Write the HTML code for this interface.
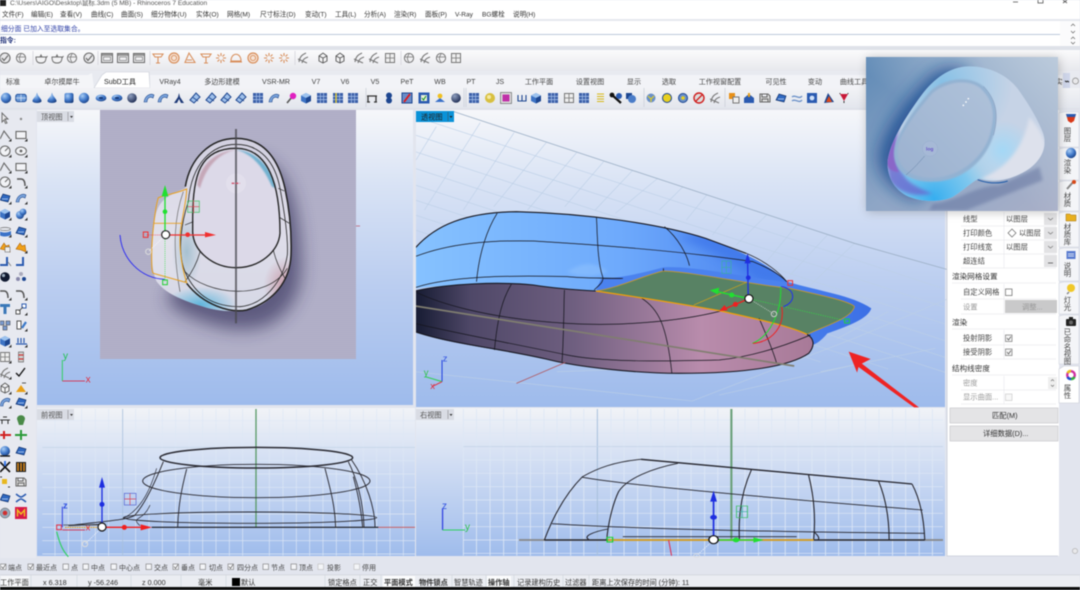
<!DOCTYPE html>
<html><head><meta charset="utf-8"><title>Rhino</title>
<style>
html,body{margin:0;padding:0;background:#e2e5ee;width:1080px;height:590px;overflow:hidden}
svg{display:block;filter:blur(.5px)}
text{font-family:"Liberation Sans","Noto Sans CJK SC",sans-serif;font-size:6.8px;fill:#333}
.m text{font-size:6.6px;fill:#333}
.t text{font-size:7.1px;text-anchor:middle;fill:#444}
.p text{font-size:7.3px;fill:#444}
.p .g{fill:#999}
.p .h{font-size:7.6px;fill:#333}
.o text{font-size:7px;fill:#444}
.s text{font-size:7.2px;fill:#333}
.v text{font-size:7.4px;writing-mode:vertical-rl;fill:#444;text-anchor:start}
</style></head><body>
<svg width="1080" height="590" viewBox="0 0 1080 590" xmlns="http://www.w3.org/2000/svg">
<defs>
<linearGradient id="vp" x1="0" y1="0" x2="0" y2="1"><stop offset="0" stop-color="#f6f7fa"/><stop offset=".25" stop-color="#d9e3f5"/><stop offset=".6" stop-color="#bacdf0"/><stop offset="1" stop-color="#9ebbec"/></linearGradient>
<linearGradient id="vp2" x1="0" y1="0" x2="0" y2="1"><stop offset="0" stop-color="#f1f3f7"/><stop offset=".4" stop-color="#cfdcf3"/><stop offset="1" stop-color="#9fbcec"/></linearGradient>
<linearGradient id="tb" x1="0" y1="0" x2="0" y2="1"><stop offset="0" stop-color="#fbfbfc"/><stop offset="1" stop-color="#e6e7ec"/></linearGradient>
<linearGradient id="tb2" x1="0" y1="0" x2="0" y2="1"><stop offset="0" stop-color="#f2f3f6"/><stop offset="1" stop-color="#e3e6ed"/></linearGradient>
<radialGradient id="bs" cx=".35" cy=".3" r=".8"><stop offset="0" stop-color="#a8cdf5"/><stop offset=".55" stop-color="#3f77c8"/><stop offset="1" stop-color="#173a7a"/></radialGradient>
<radialGradient id="ds" cx=".35" cy=".3" r=".8"><stop offset="0" stop-color="#90a0c0"/><stop offset="1" stop-color="#15234a"/></radialGradient>
<pattern id="tex" width="3" height="2" patternUnits="userSpaceOnUse"><rect width="3" height="1" fill="#8d8aa8" opacity=".14"/></pattern>
<linearGradient id="body" x1="0" y1="0" x2="0" y2="1"><stop offset="0" stop-color="#d2d0e0"/><stop offset=".6" stop-color="#dedde9"/><stop offset="1" stop-color="#d6d8e6"/></linearGradient>
<radialGradient id="cy" cx=".5" cy=".5" r=".5"><stop offset="0" stop-color="#58b4dc" stop-opacity=".95"/><stop offset="1" stop-color="#58b4dc" stop-opacity="0"/></radialGradient>
<radialGradient id="pk" cx=".5" cy=".5" r=".5"><stop offset="0" stop-color="#c48a98" stop-opacity=".8"/><stop offset="1" stop-color="#c48a98" stop-opacity="0"/></radialGradient>
<radialGradient id="bb" cx=".5" cy=".5" r=".5"><stop offset="0" stop-color="#9dbccc" stop-opacity=".85"/><stop offset="1" stop-color="#9dbccc" stop-opacity="0"/></radialGradient>
<filter id="b6" x="-30%" y="-30%" width="160%" height="160%"><feGaussianBlur stdDeviation="26"/></filter>
<filter id="b2" x="-30%" y="-30%" width="160%" height="160%"><feGaussianBlur stdDeviation="5"/></filter>
<filter id="b3" x="-30%" y="-30%" width="160%" height="160%"><feGaussianBlur stdDeviation="14"/></filter>
<filter id="b1" x="-30%" y="-30%" width="160%" height="160%"><feGaussianBlur stdDeviation="2.5"/></filter>
<linearGradient id="blu" x1="0" y1="0" x2="1" y2="0"><stop offset="0" stop-color="#86c2ff"/><stop offset=".45" stop-color="#6eaafc"/><stop offset=".75" stop-color="#4d86f0"/><stop offset="1" stop-color="#3c6fe6"/></linearGradient>
<linearGradient id="und" x1="0" y1="0" x2="1" y2="0"><stop offset="0" stop-color="#161b32"/><stop offset=".14" stop-color="#4f4868"/><stop offset=".4" stop-color="#6f5f80"/><stop offset=".72" stop-color="#b98cac"/><stop offset="1" stop-color="#a87a98"/></linearGradient>
<linearGradient id="ibg" x1="0" y1="0" x2="1" y2="1"><stop offset="0" stop-color="#5f8ab6"/><stop offset=".5" stop-color="#8ea6c6"/><stop offset="1" stop-color="#aab0c8"/></linearGradient>
<linearGradient id="ibg2" x1="0" y1="1" x2="1" y2="0"><stop offset=".45" stop-color="#bccbdc" stop-opacity="0"/><stop offset="1" stop-color="#bccbdc"/></linearGradient>
<linearGradient id="itop" x1="0" y1="1" x2="1" y2="0"><stop offset="0" stop-color="#9bb1cf"/><stop offset="1" stop-color="#afc2da"/></linearGradient>
<radialGradient id="ic1" gradientUnits="userSpaceOnUse" cx="205" cy="425" r="210"><stop offset="0" stop-color="#36aef0"/><stop offset=".55" stop-color="#6cc4f0" stop-opacity=".8"/><stop offset="1" stop-color="#9cd4f0" stop-opacity="0"/></radialGradient>
<radialGradient id="ic2" gradientUnits="userSpaceOnUse" cx="230" cy="80" r="210"><stop offset="0" stop-color="#86c0e6"/><stop offset="1" stop-color="#8cc6ea" stop-opacity="0"/></radialGradient>
<radialGradient id="ic3" gradientUnits="userSpaceOnUse" cx="410" cy="280" r="90"><stop offset="0" stop-color="#a4d8f6"/><stop offset="1" stop-color="#a4d8f6" stop-opacity="0"/></radialGradient>

<g id="g1"><circle r="5" fill="#e8e8ea" stroke="#6b6b6b" stroke-width="1.1"/><path d="M-3 0 L-1 2.5 L3 -2.5" stroke="#666" fill="none" stroke-width="1.1"/></g>
<g id="g2"><circle r="4.6" fill="#f0f0f2" stroke="#777" stroke-width="1"/><path d="M-4 -1 H4 M0 -4 C-2 -1 -2 2 0 4" stroke="#777" fill="none" stroke-width=".8"/></g>
<g id="g3"><path d="M-5 -1 C-5 4 -3 5 0 5 C3 5 5 4 5 -1 Z M-1 -1 L0 -3 L1 -1 M5 0 L6.5 -2" fill="#f2f2f3" stroke="#6f6f6f" stroke-width="1"/></g>
<g id="g4"><rect x="-5.5" y="-4.5" width="11" height="9" fill="#f0f0f2" stroke="#6f6f6f" stroke-width="1.1"/><rect x="-3.5" y="-1" width="7" height="3.5" fill="none" stroke="#888" stroke-width=".8"/><rect x="-5" y="-4" width="10" height="2" fill="#999"/></g>
<g id="g5"><path d="M-4 -2 L0 -5 L4 -2 V3 L0 5 L-4 3 Z M-4 -2 L0 0 L4 -2 M0 0 V5" fill="#f2f2f3" stroke="#555" stroke-width=".9"/></g>
<g id="g6"><path d="M-4 4 C-3 -3 1 -4 3 -5 M-1 5 C0 1 2 0 5 -1 M-5 1 L4 5" fill="none" stroke="#777" stroke-width="1.1"/></g>
<g id="g7"><rect x="-4.5" y="-4.5" width="9" height="9" fill="#eee" stroke="#777"/><path d="M-4.5 0 H4.5 M0 -4.5 V4.5" stroke="#777" stroke-width=".8"/></g>
<g id="o1"><circle r="5" fill="#f5e3d6" stroke="#d88f5c" stroke-width="1.2"/><circle r="2.6" fill="none" stroke="#d88f5c" stroke-width=".9"/></g>
<g id="o2"><path d="M-5 -4 H5 L3 -1 H-3 Z M0 -1 V5 M-2 5 H2" fill="none" stroke="#d88f5c" stroke-width="1.1"/></g>
<g id="o3"><path d="M-5 4.5 L-1 -5 L5 4.5 Z M-3 2 L2 2" fill="none" stroke="#d88f5c" stroke-width="1.1"/></g>
<g id="o4"><path d="M0 -5 V-2 M0 2 V5 M-5 0 H-2 M2 0 H5 M-3.5 -3.5 L-1.5 -1.5 M1.5 1.5 L3.5 3.5 M3.5 -3.5 L1.5 -1.5 M-1.5 1.5 L-3.5 3.5" stroke="#d88f5c" stroke-width="1.1"/></g>
<g id="o5"><path d="M-5 3 C-5 -6 5 -6 5 3 Z M-6 4 H6" fill="none" stroke="#d88f5c" stroke-width="1.1"/></g>

<g id="sb"><circle r="5.2" fill="url(#bs)"/></g>
<g id="sd"><circle r="4.8" fill="url(#ds)"/></g>
<g id="cb"><path d="M-5 -2.5 L0 -5 L5 -2.5 V3 L0 5.5 L-5 3 Z" fill="#3d73c4"/><path d="M-5 -2.5 L0 0 L5 -2.5 L0 -5 Z" fill="#9cc2ee"/><path d="M0 0 V5.5 L5 3 V-2.5 Z" fill="#1d4690"/></g>
<g id="cn"><path d="M0 -5.5 C1 -1 5 1 4.5 3.5 C3 5.5 -3 5.5 -4.5 3.5 C-5 1 -1 -1 0 -5.5 Z" fill="url(#bs)"/></g>
<g id="cy2"><rect x="-4.5" y="-5" width="9" height="10" rx="2" fill="url(#bs)"/></g>
<g id="el"><ellipse rx="5.4" ry="3.4" fill="url(#bs)"/><ellipse rx="2.2" ry="1.1" fill="#173a7a"/></g>
<g id="rc"><rect x="-5.2" y="-3.6" width="10.4" height="7.2" rx="2" fill="#6c9bd8" stroke="#1f4f9b"/><path d="M0 -3.5 V3.5 M-5 0 H5" stroke="#dbe7f7" stroke-width=".7"/></g>
<g id="gd"><rect x="-5" y="-5" width="10" height="10" fill="#3b5fa8"/><path d="M-5 -1.6 H5 M-5 1.6 H5 M-1.6 -5 V5 M1.6 -5 V5" stroke="#a9c4ec" stroke-width=".7"/></g>
<g id="wd"><path d="M-5 2 L1 -5 L5 -1 L-1 5 Z" fill="#9fc0ea" stroke="#1d4690" stroke-width="1"/><path d="M-2 -.5 L3 3" stroke="#1d4690" stroke-width=".8"/></g>
<g id="wy"><path d="M0 -5 L1 -1 L5 5 L2 5 L0 1 L-2 5 L-5 5 L-1 -1 Z" fill="#1e3a78"/></g>
<g id="ar"><path d="M-5 4 C-4 -3 2 -5 5 -3 L4 0 C1 -2 -2 0 -2 4 Z" fill="#7ba4dc" stroke="#234b8e" stroke-width=".6"/></g>
<g id="bl"><path d="M-5 2 L-2 -4 L5 -2 L3 4 Z" fill="#2f68c0" stroke="#0f2f6a" stroke-width=".7"/><path d="M-3 1 L3 1" stroke="#cfe0f8" stroke-width=".7"/></g>
<g id="or"><path d="M-5 2 L-1 -4 L1 -1 L4 -2 L5 5 L0 3 Z" fill="#f0a018" stroke="#a86008" stroke-width=".6"/></g>
<g id="arw"><path d="M-3 -5 L3 1 L0 1 L2 5 L0.5 5.5 L-1 2 L-3 4 Z" fill="#e8e8ea" stroke="#666" stroke-width=".9"/></g>
<g id="ln"><path d="M-5 4 L-1 -4 L5 4" fill="none" stroke="#666" stroke-width="1.1"/></g>
<g id="rcg"><rect x="-5" y="-3.5" width="10" height="7" fill="#f2f3f6" stroke="#666" stroke-width="1.1"/></g>
<g id="crg"><circle r="5" fill="#f2f3f6" stroke="#666" stroke-width="1.1"/><path d="M0 0 L3 -3" stroke="#666"/></g>
<g id="elg"><ellipse rx="5.4" ry="4" fill="#f2f3f6" stroke="#666" stroke-width="1"/><circle r="1.4" fill="#666"/></g>
<g id="cv"><path d="M-5 -3 H-1 C2 -3 3 0 3 4" fill="none" stroke="#555" stroke-width="1.5"/></g>
<g id="dt"><path d="M3.5 6.5 L6.5 6.5 L6.5 3.5 Z" fill="#333"/></g>
<g id="dsp"><circle cx="0" cy="0" r="4.8" fill="#111a30"/><circle cx="-1.5" cy="-1.5" r="1.6" fill="#9ab"/></g>
<g id="gs"><path d="M-5 -4 H3 L5 -2 V4 H-5 Z M-3 -4 V-1 H2 V-4 M-3 4 V1 H3 V4" fill="#ddd" stroke="#666"/></g>
</defs>

<!-- Base -->
<rect width="1080" height="590" fill="#e2e5ee"/>
<rect width="1080" height="19" fill="#ffffff"/>
<!-- Title -->
<rect x="0" y="0" width="6" height="6" fill="#222"/>
<text x="10" y="5" style="font-size:6.6px;fill:#555">C:\Users\AIGO\Desktop\鼠标.3dm (5 MB) - Rhinoceros 7 Education</text>
<path d="M1013 2 H1018" stroke="#555" stroke-width=".8"/>
<rect x="1038" y="-2" width="5" height="5" fill="none" stroke="#555" stroke-width=".8"/>
<path d="M1063 0 L1067 3 M1067 0 L1063 3" stroke="#555" stroke-width=".8"/>

<!-- Menu -->
<g class="m">
<text x="2" y="16.5">文件(F)</text><text x="31" y="16.5">编辑(E)</text><text x="60" y="16.5">查看(V)</text><text x="91" y="16.5">曲线(C)</text><text x="121" y="16.5">曲面(S)</text><text x="151" y="16.5">细分物体(U)</text><text x="196" y="16.5">实体(O)</text><text x="227" y="16.5">网格(M)</text><text x="260" y="16.5">尺寸标注(D)</text><text x="305" y="16.5">变动(T)</text><text x="335" y="16.5">工具(L)</text><text x="364" y="16.5">分析(A)</text><text x="394" y="16.5">渲染(R)</text><text x="425" y="16.5">面板(P)</text><text x="455" y="16.5">V-Ray</text><text x="482" y="16.5">BG螺栓</text><text x="513" y="16.5">说明(H)</text>
</g>
<!-- Command -->
<rect x="0" y="19" width="1080" height="2" fill="#e6e8ee"/>
<rect x="0" y="21" width="1060" height="13" fill="#fff"/>
<rect x="0" y="34" width="1080" height=".8" fill="#b5c4d8"/>
<rect x="0" y="35" width="1060" height="11" fill="#fff"/>
<rect x="1060" y="21" width="20" height="25" fill="#fbfbfc"/>
<path d="M1071 26 L1073 24 L1075 26 M1071 31 L1073 33 L1075 31 M1071 39 L1073 37 L1075 39 M1071 42 L1073 44 L1075 42" fill="none" stroke="#666" stroke-width=".7"/>
<rect x="0" y="46" width="1080" height="4" fill="#dfe2e9"/>
<text x="1" y="31" style="font-size:6.8px;fill:#3042a8">细分面 已加入至选取集合。</text>
<text x="0" y="42.5" style="font-size:6.8px;fill:#1d2f78;font-weight:700">指令:</text>

<!-- Toolbar 1 -->
<rect x="0" y="50" width="1080" height="22" fill="url(#tb)"/>
<g>
<use href="#g1" x="5" y="58"/><use href="#g2" x="21" y="58"/><use href="#g3" x="41" y="58"/><use href="#g3" x="57" y="58"/><use href="#g2" x="72" y="58"/><use href="#g1" x="89" y="58"/>
<use href="#g4" x="107" y="58"/><use href="#g4" x="123" y="58"/><use href="#g4" x="139" y="58"/>
<use href="#o2" x="158" y="58"/><use href="#o1" x="174" y="58"/><use href="#o3" x="190" y="58"/><use href="#o2" x="206" y="58"/><use href="#o4" x="221" y="58"/><use href="#o5" x="236" y="58"/><use href="#o1" x="253" y="58"/><use href="#o4" x="269" y="58"/><use href="#o4" x="284" y="58"/>
<use href="#g6" x="303" y="58"/><use href="#g5" x="323" y="58"/><use href="#g5" x="340" y="58"/><use href="#g6" x="359" y="58"/><use href="#g6" x="374" y="58"/><use href="#g7" x="390" y="58"/><use href="#g2" x="409" y="58"/><use href="#g6" x="425" y="58"/><use href="#g2" x="441" y="58"/><use href="#g7" x="456" y="58"/>
<path d="M33 51 V65 M98 51 V65 M150 51 V65 M295 51 V65 M401 51 V65" stroke="#cfcfd6" stroke-width=".7"/>
</g>

<!-- Tabs -->
<rect x="0" y="71" width="1080" height="17" fill="#e8eaf0"/>
<path d="M0 75 H88 L92 73 L94 88 H0 Z" fill="#f4f5f8"/>
<path d="M94 88 L102 75 L106 72 H149 L150 88 Z" fill="#fff" stroke="#c8ccd6" stroke-width=".6"/>
<rect x="150" y="75" width="912" height="13" fill="#f2f3f7"/>
<rect x="1063" y="73" width="7" height="15" fill="#cfd6ea"/>
<circle cx="1075.5" cy="81" r="3" fill="#e8e8ea" stroke="#888" stroke-width=".7"/>
<path d="M1065 81 L1067 82 M1067 81 L1069 82" stroke="#222" stroke-width="1"/>
<g class="t">
<text x="13" y="84">标准</text><text x="62" y="84">卓尔摸犀牛</text><text x="120" y="84" style="fill:#222">SubD工具</text><text x="170" y="84">VRay4</text><text x="222" y="84">多边形建模</text><text x="276" y="84">VSR-MR</text><text x="316" y="84">V7</text><text x="345" y="84">V6</text><text x="375" y="84">V5</text><text x="407" y="84">PeT</text><text x="440" y="84">WB</text><text x="471" y="84">PT</text><text x="500" y="84">JS</text><text x="539" y="84">工作平面</text><text x="590" y="84">设置视图</text><text x="634" y="84">显示</text><text x="669" y="84">选取</text><text x="720" y="84">工作视窗配置</text><text x="776" y="84">可见性</text><text x="815" y="84">变动</text><text x="854" y="84">曲线工具</text><text x="1059" y="84">实</text>
</g>

<!-- Toolbar 2 -->
<rect x="0" y="88" width="1080" height="20" fill="url(#tb2)"/>
<g>
<use href="#sb" x="6" y="98"/><use href="#rc" x="21" y="98"/><use href="#cn" x="37" y="98"/><use href="#cn" x="52" y="98"/><use href="#cy2" x="69" y="98"/><use href="#sb" x="84" y="98"/><use href="#el" x="101" y="98"/><use href="#el" x="117" y="98"/><use href="#sd" x="132" y="98"/><use href="#ar" x="149" y="98"/><use href="#ar" x="163" y="98"/><use href="#wy" x="179" y="98"/><use href="#wd" x="195" y="98"/><use href="#wd" x="211" y="98"/><use href="#wd" x="226" y="98"/><use href="#wd" x="241" y="98"/><use href="#gd" x="258" y="98"/><use href="#ar" x="274" y="98"/>
<g transform="translate(291 98)"><path d="M-4 5 L1 -1" stroke="#555" stroke-width="1.6"/><circle cx="2" cy="-2" r="3.2" fill="#e020c0"/></g>
<use href="#cb" x="306" y="98"/><use href="#gd" x="322" y="98"/>
<g transform="translate(338 98)"><use href="#gd"/><path d="M-2 -5 V5" stroke="#f0d020" stroke-width="1.2"/></g>
<use href="#gd" x="353" y="98"/>
<g transform="translate(372 98)"><path d="M-5 -2 H5 M-4 -2 V4 M4 -2 V4 M-5 4 H-2 M2 4 H5" stroke="#333" stroke-width="1.3" fill="none"/></g>
<g transform="translate(389 98)"><circle cy="-2.5" r="3" fill="#1d4690"/><circle cy="2.5" r="3" fill="#1d4690"/></g>
<g transform="translate(407 98)"><rect x="-5" y="-5" width="10" height="10" fill="#6a8cc8" stroke="#1d4690"/><path d="M-3 4 L3 -4" stroke="#e01818" stroke-width="1.8"/></g>
<g transform="translate(424 98)"><rect x="-5.5" y="-5.5" width="11" height="11" fill="#2a5ab0"/><rect x="-3" y="-3" width="6" height="6" fill="#e8f0d8"/><path d="M-2 0 L-.5 2 L2 -2" stroke="#0a8a20" fill="none"/></g>
<g transform="translate(440 98)"><path d="M-5 4 L0 0 L5 4 Z" fill="#3a70c8"/><circle cy="-2" r="2.4" fill="#f0c020"/></g>
<use href="#sd" x="456" y="98"/><path d="M466 88 V107" stroke="#c8ccd6" stroke-width=".7"/>
<use href="#gd" x="474" y="98"/>
<g transform="translate(490 98)"><circle r="5" fill="#d8c040"/><circle cx="-1" cy="-1" r="2" fill="#f4e8a0"/></g>
<g transform="translate(506 98)"><rect x="-5.5" y="-5.5" width="11" height="11" fill="#ddd" stroke="#555" stroke-width=".6"/><rect x="-3.5" y="-3.5" width="7" height="7" fill="#c030a8"/></g>
<g transform="translate(522 98)"><path d="M-4 -3 V3 H4 V-3 M0 -3 V3" fill="none" stroke="#1d4690" stroke-width="1.1"/></g>
<use href="#cb" x="536" y="98"/>
<use href="#gd" x="553" y="98"/><use href="#g7" x="569" y="98"/><use href="#gd" x="584" y="98"/>
<g transform="translate(600 98)"><path d="M-3 -4 H4 M-3 -1.5 H4 M-3 1 H4 M-3 3.5 H4" stroke="#d8b818" stroke-width="1"/></g>
<g transform="translate(616 98)"><path d="M-5 -4 L5 5" stroke="#111" stroke-width="2.2"/><circle cx="-4" cy="-3" r="2.4" fill="#111"/><circle cx="3" cy="-2" r="3" fill="#2a5ab0"/></g>
<g transform="translate(631 98)"><rect x="-5" y="-5" width="6" height="6" fill="#1d4690"/><circle cx="1" cy="1" r="4" fill="#4a7cc8"/></g>
<g transform="translate(651 98)"><circle r="4.5" fill="#6a90c8"/><path d="M-3 -2 L0 1 L3 -2 M0 1 V4" stroke="#e8d020" stroke-width="1.1" fill="none"/></g>
<g transform="translate(667 98)"><circle r="4.5" fill="#e8d020" stroke="#1d4690"/></g>
<g transform="translate(683 98)"><circle r="4.5" fill="#6a90c8" stroke="#1d4690"/><circle r="1.8" fill="#e8d020"/></g>
<g transform="translate(699 98)"><circle r="5" fill="#ddd" stroke="#d02020" stroke-width="1.4"/><path d="M-3.5 3.5 L3.5 -3.5" stroke="#d02020" stroke-width="1.3"/></g>
<use href="#g6" x="715" y="98"/>
<g transform="translate(734 98)"><rect x="-5" y="-5" width="6" height="6" fill="#e89018"/><rect x="-1" y="-1" width="6" height="6" fill="#eee" stroke="#777"/></g>
<g transform="translate(749 98)"><path d="M-5 5 V0 L0 -4 L5 0 V5 Z" fill="#2a5ab0"/><rect x="-1" y="-5" width="2" height="4" fill="#e8a018"/></g>
<use href="#gs" x="765" y="98"/>
<use href="#bl" x="781" y="98"/>
<g transform="translate(797 98)"><path d="M-5 -1 C-2 -4 2 2 5 -2 M-5 3 C-2 0 2 6 5 2" stroke="#6a90c8" stroke-width="1.3" fill="none"/></g>
<g transform="translate(812 98)"><rect x="-5" y="-5" width="10" height="10" fill="#2a5ab0"/><circle r="2.4" fill="#cfe0f8"/></g>
<g transform="translate(829 98)"><path d="M-5 5 L-1 -5 L5 4 Z" fill="#1d4690"/><path d="M-3 4 L0 -2 L3 4 Z" fill="#e04818"/></g>
<g transform="translate(844 98)"><path d="M-4 -4 L4 -4 L0 3 Z" fill="#c81838"/><path d="M-4 -4 V-5 M4 -4 V-5 M0 3 V5" stroke="#333"/></g>
<path d="M366 88 V107 M464 88 V107 M644 88 V107 M725 88 V107" stroke="#c8ccd6" stroke-width=".7"/>
</g>
<rect x="0" y="108" width="1080" height="2" fill="#dfe2ea"/>

<!-- Left toolbar -->
<rect x="0" y="110" width="36" height="448" fill="#e7e9f0"/>
<g>
<use href="#arw" x="5" y="118"/><circle cx="21" cy="119" r="1.2" fill="#888"/>
<use href="#ln" x="5" y="135"/><use href="#rcg" x="21" y="135"/><use href="#dt" x="5" y="135"/><use href="#dt" x="21" y="135"/>
<use href="#crg" x="5" y="151"/><use href="#elg" x="21" y="151"/><use href="#dt" x="5" y="151"/><use href="#dt" x="21" y="151"/>
<use href="#ln" x="5" y="167"/><use href="#rcg" x="21" y="167"/><use href="#dt" x="5" y="167"/><use href="#dt" x="21" y="167"/>
<use href="#crg" x="5" y="182"/><use href="#cv" x="22" y="182"/><use href="#dt" x="5" y="182"/><use href="#dt" x="21" y="182"/>
<use href="#bl" x="5" y="198"/><use href="#ar" x="21" y="198"/><use href="#dt" x="5" y="198"/><use href="#dt" x="21" y="198"/>
<use href="#cb" x="5" y="214"/><g transform="translate(21 214)"><circle cx="-1" cy="1" r="4" fill="url(#bs)"/><circle cx="2" cy="-2" r="3.4" fill="url(#bs)"/></g><use href="#dt" x="5" y="214"/><use href="#dt" x="21" y="214"/>
<g transform="translate(5 231)"><ellipse cy="-2" rx="5.5" ry="1.6" fill="none" stroke="#555" stroke-width=".6"/><path d="M-6 0 C-2 2 2 2 6 0 V4 C2 6 -2 6 -6 4 Z" fill="#3a72c8"/></g><use href="#bl" x="21" y="231"/><use href="#dt" x="5" y="231"/><use href="#dt" x="21" y="231"/>
<g transform="translate(5 247)"><use href="#or"/><rect x="0" y="0" width="5" height="5" fill="#eee" stroke="#555" stroke-width=".5"/></g><use href="#or" x="21" y="247"/><use href="#dt" x="21" y="247"/>
<g transform="translate(5 261)"><path d="M-5 3 H1 V-4 H3 V5 H-5 Z" fill="#2a5ab0"/><path d="M3 1 L6 5" stroke="#888"/></g><g transform="translate(21 261)"><path d="M-5 3 H1 V-4 H3 V5 H-5 Z" fill="#2a5ab0"/></g>
<use href="#dsp" x="5" y="277"/><g transform="translate(21 277)"><circle cx="0" cy="-3" r="2" fill="#aab"/><circle cx="-3" cy="2" r="2" fill="#88a"/><circle cx="3" cy="2" r="2" fill="#1d4690"/></g>
<use href="#cv" x="5" y="294"/><use href="#cv" x="21" y="294"/><use href="#dt" x="5" y="294"/><use href="#dt" x="21" y="294"/>
<g transform="translate(5 309)"><path d="M-5 -5 H5 V-2 H1.5 V5 H-1.5 V-2 H-5 Z" fill="#3a78b8"/></g><g transform="translate(21 309)"><rect x="1" y="-5" width="4" height="4" fill="#fff" stroke="#2a5ab0"/><rect x="-5" y="1" width="4" height="4" fill="#fff" stroke="#555"/><path d="M-2 2 L2 -2" stroke="#555"/></g><use href="#dt" x="21" y="309"/>
<g transform="translate(5 325)"><rect x="-5" y="-4" width="4" height="4" fill="#7a9ad0" stroke="#333" stroke-width=".5"/><rect x="1" y="-4" width="4" height="4" fill="#7a9ad0" stroke="#333" stroke-width=".5"/><rect x="-2" y="1" width="4" height="4" fill="#7a9ad0" stroke="#333" stroke-width=".5"/></g><g transform="translate(21 325)"><path d="M-4 -4 H0 V4 H-4 Z" fill="#fff" stroke="#555"/><path d="M1 3 L5 -3" stroke="#3a78c8" stroke-width="2.2"/></g><use href="#dt" x="21" y="325"/>
<use href="#cb" x="5" y="341"/><g transform="translate(21 341)"><path d="M-5 3 H6 M-3 -3 V2 M0 -3 V2 M3 -3 V2" stroke="#2a5ab0" stroke-width="1.2"/></g><use href="#dt" x="5" y="341"/><use href="#dt" x="21" y="341"/>
<use href="#g7" x="5" y="357"/><g transform="translate(21 357)"><rect x="-2.5" y="-5" width="5" height="10" fill="#ccc" stroke="#555" stroke-width=".6"/><path d="M-2.5 -2 H2.5 M-2.5 2 H2.5" stroke="#d02020"/></g><use href="#dt" x="5" y="357"/>
<use href="#g6" x="5" y="373"/><path d="M16 373 L19 376 L25 368" fill="none" stroke="#111" stroke-width="1.3"/><use href="#dt" x="5" y="373"/>
<use href="#g5" x="5" y="388"/><g transform="translate(21 388)"><path d="M-5 4 L0 -3 L5 4 Z" fill="#e8a018"/><path d="M1 -5 L5 -5" stroke="#555"/></g><use href="#dt" x="5" y="388"/><use href="#dt" x="21" y="388"/>
<use href="#ar" x="5" y="402"/><use href="#bl" x="21" y="402"/><use href="#dt" x="5" y="402"/><use href="#dt" x="21" y="402"/>
<g transform="translate(5 420)"><path d="M-5 0 H5 M-3 0 V4 M3 0 V4 M-2 -3 H2" stroke="#333" stroke-width="1" fill="none"/></g><g transform="translate(21 420)"><path d="M-4 -1 C-4 -6 4 -6 4 -1 L2 5 H-2 Z" fill="#4a8a48"/></g>
<g transform="translate(5 435)"><path d="M-6 0 H6 M-1 -4 V4" stroke="#d02020" stroke-width="2"/></g><g transform="translate(21 435)"><path d="M-6 0 H6 M0 -5 V5" stroke="#2a9a38" stroke-width="2"/></g>
<g transform="translate(5 451)"><circle r="5" fill="url(#bs)"/><path d="M-5 5 H5" stroke="#111" stroke-width="1.4"/></g><use href="#bl" x="21" y="451"/>
<g transform="translate(5 467)"><path d="M-5 -5 L5 5 M5 -5 L-5 5" stroke="#111" stroke-width="1.6"/><path d="M0 -6 V-1" stroke="#3a78e8" stroke-width="2"/></g><g transform="translate(21 467)"><rect x="-5" y="-5" width="10" height="10" fill="#222"/><path d="M-3 -4 V4 M0 -4 V4 M3 -4 V4" stroke="#e89018" stroke-width="1.4"/></g>
<g transform="translate(5 482)"><rect x="-3" y="-3" width="5" height="5" fill="#e8b820"/><path d="M-5 -5 H-3 M3 5 H5" stroke="#333"/></g><use href="#gs" x="21" y="482"/>
<use href="#bl" x="5" y="498"/><g transform="translate(21 498)"><path d="M-5 -4 C0 0 0 0 5 -4 M-5 4 C0 0 0 0 5 4" stroke="#2a5ab0" stroke-width="1.6" fill="none"/></g>
<g transform="translate(5 513)"><circle r="5" fill="#9ab" stroke="#555" stroke-width=".5"/><circle r="2.3" fill="#d03030"/></g><g transform="translate(21 513)"><rect x="-6" y="-6" width="12" height="12" fill="#d81848"/><path d="M-3.5 3.5 V-3 L0 1 L3.5 -3 V3.5" stroke="#f0c020" fill="none" stroke-width="1.4"/></g>
</g>

<!-- Top view -->
<rect x="37" y="110" width="376" height="295" fill="url(#vp)"/>
<rect x="100" y="110" width="256" height="249" fill="#b3b2c9"/>
<rect x="100" y="110" width="256" height="249" fill="url(#tex)"/>
<clipPath id="cT"><rect x="300" y="15" width="768" height="747"/></clipPath>
<g transform="translate(0 105) scale(.33333)">
<g clip-path="url(#cT)">
<path d="M708 100 C790 100 835 160 855 250 C870 320 875 390 873 450 C870 530 820 590 760 610 C720 622 660 622 610 605 C560 590 500 570 470 530 Z" transform="translate(30 55)" fill="#2c2852" opacity=".62" filter="url(#b6)"/>
</g>
<path d="M708 100 C790 100 835 160 855 250 C870 320 875 390 873 450 C870 530 820 590 760 610 C720 622 660 622 610 605 C560 590 500 570 470 530 C455 500 450 430 462 360 C470 300 480 280 555 250 C570 160 630 100 708 100Z" fill="url(#body)"/>
<clipPath id="cB"><path d="M708 100 C790 100 835 160 855 250 C870 320 875 390 873 450 C870 530 820 590 760 610 C720 622 660 622 610 605 C560 590 500 570 470 530 C455 500 450 430 462 360 C470 300 480 280 555 250 C570 160 630 100 708 100Z"/></clipPath>
<g clip-path="url(#cB)">
<ellipse cx="600" cy="600" rx="110" ry="55" fill="url(#cy)"/>
<ellipse cx="860" cy="540" rx="70" ry="85" fill="url(#pk)"/>
<ellipse cx="560" cy="440" rx="45" ry="110" fill="url(#bb)"/>
</g>
<path d="M578 340 C578 210 600 130 708 130 C806 130 840 240 840 385 C835 440 780 488 708 488 C640 488 580 440 578 380 Z" fill="#dcd9e8"/>
<path d="M592 240 C600 180 645 140 708 134 C655 146 618 185 600 250 Z" fill="#b27f90" opacity=".55" filter="url(#b1)"/>
<path d="M828 250 C815 190 770 138 708 134 C760 148 792 190 816 245 Z" fill="#4fa4c8" opacity=".75" filter="url(#b1)"/>
<circle cx="708" cy="235" r="30" fill="#e2dfec"/>
<g fill="none" stroke="#222">
<path d="M556 245 C570 160 630 100 708 100 C790 100 835 160 855 250 C870 320 875 390 873 450 C870 530 820 590 740 615 C690 625 610 600 560 535" stroke-width="4.5"/>
<path d="M565 290 C575 170 640 118 708 118 C780 118 825 170 840 250 C855 330 865 400 862 450 C850 530 790 600 720 605 C650 605 590 580 555 500 C530 440 545 350 565 290" stroke-width="2.4"/>
<path d="M578 340 C578 210 600 130 708 130 C806 130 840 240 840 385 C835 440 780 488 708 488 C640 488 580 440 578 380 Z" stroke-width="4"/>
<path d="M600 440 C590 480 570 510 555 530 M820 435 C830 480 850 510 855 520 M555 500 C620 570 800 590 862 490 M840 338 L868 355 M835 250 L853 258 M580 350 L555 360" stroke-width="2"/>
<path d="M550 260 C525 330 515 420 540 560" stroke="#555" stroke-width="2"/>
</g>
<path d="M708 72 V655" stroke="#4a4a50" stroke-width="6" opacity=".75"/>
<path d="M695 235 H720" stroke="#d0506a" stroke-width="4" stroke-dasharray="8 4"/>
<path d="M560 252 C520 268 500 268 475 278 C465 310 455 400 455 450 C455 480 455 500 460 505 L560 533 C540 470 535 400 545 355 C550 320 560 280 560 252Z" fill="#fff" fill-opacity=".12" stroke="#e8a020" stroke-width="3"/>
<path d="M460 355 H548" stroke="#e8a020" stroke-width="2.5"/>
<path d="M360 390 C365 460 420 520 495 523" fill="none" stroke="#3030f0" stroke-width="3"/>
<path d="M495 390 V530" stroke="#30e040" stroke-width="2" stroke-dasharray="3 3"/>
<path d="M495 390 V260" stroke="#20e030" stroke-width="4"/>
<path d="M495 240 L485 274 H505Z" fill="#20e030"/>
<circle cx="495" cy="320" r="7" fill="#20e030"/>
<rect x="488" y="525" width="14" height="14" fill="none" stroke="#20d030" stroke-width="3"/>
<path d="M497 390 L440 390" stroke="#f04050" stroke-width="2" stroke-dasharray="3 3"/>
<path d="M497 390 H620" stroke="#f03030" stroke-width="4"/>
<path d="M615 381 L648 390 L615 397Z" fill="#f03030"/>
<circle cx="563" cy="389" r="7" fill="#f03030"/>
<rect x="430" y="381" width="14" height="16" fill="none" stroke="#f03030" stroke-width="3"/>
<path d="M497 390 L445 440" stroke="#fff" stroke-width="2" stroke-dasharray="3 3"/>
<circle cx="445" cy="440" r="8" fill="none" stroke="#ddd" stroke-width="3"/>
<circle cx="497" cy="389" r="12" fill="#fff" stroke="#222" stroke-width="3.5"/>
<rect x="563" y="288" width="35" height="34" fill="#8ed0a0" fill-opacity=".2" stroke="#3cc060" stroke-width="2"/>
<path d="M581 285 V325 M563 305 H598" stroke="#e04050" stroke-width="2"/>
<path d="M187 765 V828" stroke="#30d060" stroke-width="3"/>
<path d="M187 828 H255" stroke="#d04060" stroke-width="3"/>
<text x="189" y="762" style="font-size:30px;fill:#20c050">y</text>
<text x="257" y="832" style="font-size:30px;fill:#e03040">x</text>
</g>
<rect x="37" y="111" width="37" height="11" fill="#d9dce4"/>
<text x="41" y="119.5" style="font-size:7.2px;fill:#555">顶视图</text>
<path d="M68 112 V121" stroke="#777" stroke-width=".5"/><path d="M70 116 H73 L71.5 118Z" fill="#333"/>
<path d="M356 226 H360" stroke="#c06070" stroke-width=".8"/>

<!-- Perspective -->
<rect x="416" y="110" width="529" height="297" fill="url(#vp)"/>
<clipPath id="cP"><rect x="3" y="15" width="1580" height="892"/></clipPath>
<g transform="translate(415 105) scale(.338 .33333)" clip-path="url(#cP)">
<g stroke="#bccfe6" stroke-width="1.8" fill="none">
<path d="M0 35 L1568 552 M0 90 L1568 607 M0 140 L1568 657 M0 190 L1568 707 M0 240 L1568 757 M0 285 L1568 802 M0 330 L1400 792 M0 375 L1200 771 M0 800 L820 888"/>
<path d="M63 65 L3 165 M193 53 L28 315 M293 83 L143 315 M388 113 L233 305 M478 143 L333 315 M558 170 L443 305 M643 197 L533 315 M718 220 L593 325 M793 245 L723 315 M863 270 L803 345 M950 300 L880 390 M1040 330 L950 420 M1130 360 L1040 470 M1220 390 L1110 510 M1300 415 L1170 540"/>
<path d="M1580 580 L1300 700 L820 888 M1540 730 L1200 800 M1400 620 L1250 700 M1300 780 L900 870 M420 800 L1000 780"/>
</g>
<path d="M115 20 L1300 415 L1580 495" stroke="#9db0c6" stroke-width="2.5" fill="none"/>
<path d="M0 430 C60 360 150 322 300 320 C500 325 720 355 860 400 C940 430 1040 470 1100 530 C1200 560 1290 570 1350 610 C1340 640 1290 660 1220 685 C1200 710 1180 720 1175 720 L1160 690 L905 620 L530 558 C400 545 150 530 0 550Z" fill="url(#blu)"/>
<clipPath id="cPb"><path d="M0 430 C60 360 150 322 300 320 C500 325 720 355 860 400 C940 430 1040 470 1100 530 L1110 560 L530 560 L0 550Z"/></clipPath>
<g clip-path="url(#cPb)">
<path d="M860 380 C940 410 1040 450 1120 530 L1020 530 C960 480 880 440 770 395Z" fill="#4178ea" opacity=".85" filter="url(#b3)"/>
<path d="M550 522 C620 517 680 502 735 487 C820 482 950 512 1100 532 L1110 552 C1000 542 820 502 735 498 C680 510 600 550 535 558Z" fill="#4b82ee"/>
</g>
<path d="M450 500 C500 470 530 470 570 500 C540 515 490 520 450 500Z" fill="#a0ceff" opacity=".35" filter="url(#b2)"/>
<path d="M0 558 C100 535 250 530 350 540 C400 548 480 555 535 558 C650 575 780 595 905 618 C1000 640 1100 660 1160 688 C1185 700 1180 730 1165 745 C1100 790 950 805 780 805 C650 805 480 785 400 765 C280 735 100 720 0 680Z" fill="url(#und)"/>
<path d="M535 558 C600 550 680 510 735 498 C820 500 1000 540 1110 550 C1200 570 1290 590 1300 605 C1290 640 1220 660 1160 688 C1100 660 1000 640 905 618 C780 595 650 575 535 558Z" fill="#588264" stroke="#d89a20" stroke-width="2.2"/>
<path d="M825 600 L985 530" stroke="#c8a020" stroke-width="2.2"/>
<g fill="none" stroke="#15151d" stroke-width="2.2">
<path d="M0 430 C60 360 150 322 300 320 C500 325 720 355 860 400 C900 415 940 430 980 445" stroke-width="3.2"/>
<path d="M980 445 C1040 470 1080 505 1100 530"/>
<path d="M243 325 C215 370 190 440 182 530 M537 338 C540 400 540 470 555 515 C560 530 545 540 530 555 M555 520 C580 520 600 520 615 520 M738 365 C780 400 805 450 812 482 M735 490 V498"/>
<path d="M0 455 C100 415 220 405 350 408 C550 420 800 440 1000 470 C1050 490 1080 510 1100 530"/>
<path d="M0 548 C100 515 260 510 450 515 C500 520 560 520 610 520"/>
<path d="M285 538 C260 580 245 630 235 735 M442 555 C440 620 440 700 435 770 M668 578 C720 610 745 660 760 805 M1018 640 C1040 690 1060 740 1070 775"/>
<path d="M0 560 C60 590 200 640 450 655 C600 665 780 650 905 618"/>
<path d="M0 655 C100 680 260 710 450 750 C550 770 700 770 900 765 C1000 755 1100 720 1170 690"/>
<path d="M0 680 C100 715 280 735 400 765 C480 785 650 805 780 805 C950 805 1100 790 1165 745 C1185 720 1180 700 1160 688" stroke-width="3.2"/>
<path d="M0 558 C100 535 250 530 350 540 C400 548 480 555 535 558" stroke-width="3.2"/>
</g>
<path d="M0 603 L1122 783" stroke="#807e70" stroke-width="5"/>
<path d="M300 835 L445 772" stroke="#b05860" stroke-width="2.5"/>
<path d="M535 558 C650 575 780 595 905 618 C1000 640 1100 660 1160 688" fill="none" stroke="#f0a008" stroke-width="3.5"/>
<rect x="908" y="468" width="27" height="37" fill="none" stroke="#3cb0a0" stroke-width="2"/><path d="M921 468 V505 M908 487 H935" stroke="#3cb0a0" stroke-width="2"/>
<path d="M988 581 L1278 648" stroke="#30e040" stroke-width="2.5" stroke-dasharray="3 4"/>
<path d="M988 581 L1062 627" stroke="#ddd" stroke-width="2" stroke-dasharray="3 3"/>
<path d="M1083 545 C1125 550 1130 590 1090 605" fill="none" stroke="#2030f0" stroke-width="3"/>
<path d="M1082 545 C1085 620 1050 695 998 715" fill="none" stroke="#20e030" stroke-width="3"/>
<path d="M1085 605 C1095 660 1060 710 1000 715" fill="none" stroke="#f02020" stroke-width="3"/>
<rect x="1103" y="527" width="14" height="14" fill="none" stroke="#f03030" stroke-width="3"/>
<rect x="1271" y="642" width="14" height="12" fill="none" stroke="#20d040" stroke-width="3"/>
<circle cx="1062" cy="627" r="8" fill="none" stroke="#ccc" stroke-width="3"/>
<path d="M986 581 L984 470" stroke="#2030e0" stroke-width="4"/><path d="M984 445 L975 475 H993Z" fill="#2030e0"/><circle cx="986" cy="518" r="7" fill="#2030e0"/>
<path d="M988 581 L895 560" stroke="#20e030" stroke-width="4"/><path d="M872 556 L900 548 L896 568Z" fill="#20e030"/><circle cx="937" cy="570" r="7.5" fill="#20e030"/>
<path d="M988 581 L920 610" stroke="#f02020" stroke-width="4"/><path d="M900 618 L916 600 L925 616Z" fill="#f02020"/><circle cx="948" cy="598" r="7.5" fill="#f02020"/>
<ellipse cx="988" cy="581" rx="12" ry="12" fill="#fff" stroke="#111" stroke-width="3.5"/>
<path d="M80 765 V830" fill="none" stroke="#2040e0" stroke-width="3"/>
<path d="M30 815 L80 830" stroke="#30d050" stroke-width="3"/>
<path d="M50 845 L80 830" stroke="#e03040" stroke-width="3"/>
<text x="82" y="770" style="font-size:28px;fill:#3050e0">z</text>
<text x="26" y="812" style="font-size:28px;fill:#30c050">y</text>
<text x="45" y="852" style="font-size:28px;fill:#e03040">x</text>
<path d="M1283 740 L1348 762 L1322 776 L1492 908 L1486 914 L1312 786 L1308 803 Z" fill="#ee2424"/>
</g>
<rect x="416" y="111" width="38" height="11" fill="#0a92d8"/>
<text x="421" y="119.5" style="font-size:7.2px;fill:#222">透视图</text>
<path d="M448 112 V121" stroke="#444" stroke-width=".5"/><path d="M449.5 116 H452.5 L451 118Z" fill="#222"/>

<!-- Front view -->
<rect x="37" y="408" width="378" height="148" fill="url(#vp2)"/>
<g transform="translate(0 405) scale(.33333)">
<g stroke="#dde7f5" stroke-width="2" fill="none">
<path d="M127 367 H1245 M127 327 H1245 M127 287 H1245 M127 247 H1245 M127 207 H1245 M127 167 H1245 M127 127 H1245 M127 87 H1245 M127 47 H1245 M127 407 H1245 M127 447 H1245"/>
<path d="M165 12 V452 M205 12 V452 M245 12 V452 M286 12 V452 M326 12 V452 M407 12 V452 M447 12 V452 M487 12 V452 M527 12 V452 M568 12 V452 M608 12 V452 M648 12 V452 M688 12 V452 M728 12 V452 M808 12 V452 M849 12 V452 M889 12 V452 M929 12 V452 M969 12 V452 M1009 12 V452 M1050 12 V452 M1090 12 V452 M1130 12 V452 M1170 12 V452 M1210 12 V452"/>
</g>
<path d="M368 12 V452" stroke="#a8c0dc" stroke-width="2.4"/>
<path d="M127 127 H1245" stroke="#c4d4e8" stroke-width="2.2"/>
<path d="M768 12 V367" stroke="#5a9a68" stroke-width="4"/>
<path d="M1135 367 H1245" stroke="#c85050" stroke-width="2.5"/>
<path d="M455 367 H1135" stroke="#15151a" stroke-width="3.5"/>
<g fill="none" stroke="#2a2a32">
<ellipse cx="769" cy="158" rx="289" ry="31" stroke-width="4.5"/>
<ellipse cx="769" cy="228" rx="341" ry="50" stroke-width="2.8"/>
<ellipse cx="750" cy="338" rx="380" ry="17" stroke-width="2.8"/>
<path d="M490 170 C470 220 440 290 405 330 C390 345 300 350 205 362 L300 358" stroke-width="2.8"/>
<path d="M470 190 C455 240 430 310 370 340" stroke-width="2"/>
<path d="M560 192 C545 250 535 300 533 367 M975 190 C990 250 1005 300 1007 367 M1045 170 C1070 220 1090 290 1092 367 M1055 165 C1100 230 1125 310 1125 367 M1060 215 C1075 270 1085 330 1088 367" stroke-width="2.8"/>
<path d="M450 300 C430 350 390 335 420 362" stroke-width="2"/>
</g>
<path d="M190 360 H300" stroke="#444" stroke-width="2.5"/>
<path d="M195 367 H300" stroke="#e8a018" stroke-width="3" stroke-dasharray="5 2"/>
<rect x="170" y="360" width="14" height="14" fill="none" stroke="#e83040" stroke-width="3"/>
<path d="M187 375 H255" stroke="#d04060" stroke-width="3"/>
<path d="M187 305 V367" stroke="#3040e0" stroke-width="3"/>
<text x="189" y="310" style="font-size:28px;fill:#3050e0;font-weight:700">z</text>
<text x="257" y="377" style="font-size:28px;fill:#e03040">x</text>
<path d="M170 380 C180 420 190 440 205 455" fill="none" stroke="#30d060" stroke-width="3.5"/>
<path d="M306 367 L255 417" stroke="#fff" stroke-width="2" stroke-dasharray="3 3"/>
<circle cx="255" cy="417" r="8" fill="none" stroke="#ddd" stroke-width="3"/>
<path d="M306 365 V240" stroke="#1d2ee0" stroke-width="4"/><path d="M306 216 L297 248 H315Z" fill="#1d2ee0"/><circle cx="306" cy="298" r="7.5" fill="#1d2ee0"/>
<path d="M306 367 H430" stroke="#f02020" stroke-width="4"/><path d="M422 358 L456 367 L422 376Z" fill="#f02020"/><circle cx="373" cy="367" r="7.5" fill="#f02020"/>
<circle cx="306" cy="366" r="12" fill="#fff" stroke="#111" stroke-width="3.5"/>
<rect x="373" y="265" width="35" height="35" fill="none" stroke="#5060d0" stroke-width="2"/><path d="M390 265 V300 M373 282 H408" stroke="#e04050" stroke-width="2"/>
</g>
<rect x="37" y="409" width="37" height="11" fill="#d9dce4"/>
<text x="41" y="417.5" style="font-size:7.2px;fill:#555">前视图</text>
<path d="M68 410 V419" stroke="#777" stroke-width=".5"/><path d="M70 414 H73 L71.5 416Z" fill="#333"/>

<!-- Right view -->
<rect x="416" y="408" width="529" height="148" fill="url(#vp2)"/>
<g transform="translate(415 405) scale(.42409 .33333)">
<g stroke="#dde7f5" stroke-width="2" fill="none">
<path d="M114 405 H1245 M114 365 H1245 M114 325 H1245 M114 285 H1245 M114 245 H1245 M114 205 H1245 M114 165 H1245 M114 125 H1245 M114 85 H1245 M114 45 H1245 M114 445 H1245"/>
<path d="M114 12 V452 M145 12 V452 M177 12 V452 M209 12 V452 M240 12 V452 M272 12 V452 M304 12 V452 M335 12 V452 M367 12 V452 M398 12 V452 M462 12 V452 M493 12 V452 M525 12 V452 M556 12 V452 M588 12 V452 M620 12 V452 M651 12 V452 M683 12 V452 M714 12 V452 M778 12 V452 M810 12 V452 M841 12 V452 M873 12 V452 M904 12 V452 M936 12 V452 M968 12 V452 M999 12 V452 M1031 12 V452 M1062 12 V452 M1094 12 V452 M1126 12 V452 M1157 12 V452 M1189 12 V452 M1220 12 V452"/>
</g>
<path d="M430 12 V452" stroke="#a8c0dc" stroke-width="2.4"/>
<path d="M114 125 H1245" stroke="#c4d4e8" stroke-width="2.2"/>
<path d="M245 405 H1245" stroke="#888" stroke-width="5"/>
<path d="M746 12 V405" stroke="#6aa07a" stroke-width="5"/>
<g fill="none" stroke="#24242c" stroke-width="2.6">
<path d="M533 163 L1172 237" stroke-width="4"/>
<path d="M533 163 C470 170 430 190 395 215 C360 260 330 320 305 405"/>
<path d="M620 175 C560 190 500 220 480 260 C465 300 455 360 452 405"/>
<path d="M395 217 C500 240 800 275 1197 315"/>
<path d="M1172 237 C1190 280 1200 340 1202 405"/>
<path d="M323 356 C500 370 800 380 1202 385"/>
<path d="M793 195 C770 260 762 330 765 405 M928 210 C940 270 945 340 940 405 M1093 228 C1110 280 1118 340 1118 405"/>
<path d="M455 372 C420 380 395 395 410 403 M490 395 L900 395 M940 380 C950 390 955 400 950 405"/>
<path d="M305 405 H455 M940 405 H1202" stroke-width="4"/>
</g>
<path d="M455 405 H940" stroke="#d8a020" stroke-width="5"/>
<path d="M598 405 C602 430 603 440 605 452" fill="none" stroke="#e03050" stroke-width="2.5"/>
<path d="M704 405 L664 452" stroke="#fff" stroke-width="2" stroke-dasharray="3 3"/>
<ellipse cx="664" cy="452" rx="7" ry="5" fill="none" stroke="#ddd" stroke-width="2"/>
<path d="M704 405 V280" stroke="#1d2ee0" stroke-width="4"/><path d="M704 257 L696 290 H712Z" fill="#1d2ee0"/><ellipse cx="704" cy="337" rx="8" ry="7" fill="#1d2ee0"/>
<path d="M704 405 H800" stroke="#20e030" stroke-width="4"/><path d="M798 397 L822 405 L798 413Z" fill="#20e030"/><ellipse cx="757" cy="405" rx="8" ry="7" fill="#20e030"/>
<rect x="453" y="397" width="13" height="14" fill="none" stroke="#20d030" stroke-width="3"/>
<ellipse cx="704" cy="404" rx="11" ry="12" fill="#fff" stroke="#111" stroke-width="3.5"/>
<rect x="758" y="303" width="26" height="35" fill="none" stroke="#3cc060" stroke-width="2"/><path d="M771 303 V338 M758 320 H784" stroke="#3cb0a0" stroke-width="2"/>
<path d="M65 310 V375" stroke="#3040e0" stroke-width="3"/><path d="M65 375 H118" stroke="#30d060" stroke-width="3"/>
</g>
<text x="442" y="509" style="font-size:10px;fill:#3050e0">z</text>
<text x="465" y="530" style="font-size:10px;fill:#30c050">y</text>
<rect x="416" y="409" width="38" height="11" fill="#d9dce4"/>
<text x="420" y="417.5" style="font-size:7.2px;fill:#555">右视图</text>
<path d="M448 410 V419" stroke="#777" stroke-width=".5"/><path d="M449.5 414 H452.5 L451 416Z" fill="#333"/>

<!-- Right panel -->
<rect x="947" y="110" width="112" height="446" fill="#fff"/>
<path d="M947 110 V556 H1058" fill="none" stroke="#c8ccd8" stroke-width=".8"/>
<rect x="1059" y="110" width="21" height="446" fill="#e2e5ee"/>
<g class="p">
<path d="M961 226 H1056 M961 240 H1056 M961 254 H1056 M961 268 H1056 M952 283 H1056 M961 299 H1056 M961 314 H1056 M952 329 H1056 M961 345 H1056 M961 359 H1056 M952 375 H1056 M961 390 H1056 M961 404 H1056 M1004 212 V268 M1004 284 V314 M1004 330 V359 M1004 376 V404" stroke="#eaeaee" stroke-width=".7"/>
<text x="963" y="221.5">线型</text><text x="1006" y="221.5">以图层</text>
<text x="963" y="235.5">打印颜色</text><path d="M1012 229 L1016 233 L1012 237 L1008 233Z" fill="#fff" stroke="#666" stroke-width=".7"/><text x="1019" y="235.5">以图层</text>
<text x="963" y="249.5">打印线宽</text><text x="1006" y="249.5">以图层</text>
<text x="963" y="263.5">超连结</text>
<rect x="1044" y="213" width="13" height="12" fill="#e2e2e4"/><rect x="1044" y="227" width="13" height="12" fill="#e2e2e4"/><rect x="1044" y="241" width="13" height="12" fill="#e2e2e4"/><rect x="1044" y="255" width="13" height="12" fill="#e2e2e4"/>
<path d="M1048 218 L1050.5 220 L1053 218 M1048 232 L1050.5 234 L1053 232 M1048 246 L1050.5 248 L1053 246" fill="none" stroke="#777" stroke-width=".7"/>
<path d="M1048 263 H1053" stroke="#555" stroke-width=".8"/>
<text class="h" x="952" y="279">渲染网格设置</text>
<text x="963" y="294.5">自定义网格</text>
<rect x="1005.5" y="289" width="6.5" height="6.5" fill="#fff" stroke="#666" stroke-width=".7"/>
<text class="g" x="963" y="309.5">设置</text>
<rect x="1005" y="300" width="52" height="13" fill="#c9c9ca"/>
<text class="g" x="1022" y="309.5">调整...</text>
<text class="h" x="952" y="325">渲染</text>
<text x="963" y="340.5">投射阴影</text>
<rect x="1005.5" y="335" width="6.5" height="6.5" fill="#f4f4f4" stroke="#777" stroke-width=".7"/><path d="M1007 338 L1008.5 340 L1011 336.5" fill="none" stroke="#555" stroke-width=".7"/>
<text x="963" y="354.5">接受阴影</text>
<rect x="1005.5" y="349" width="6.5" height="6.5" fill="#f4f4f4" stroke="#777" stroke-width=".7"/><path d="M1007 352 L1008.5 354 L1011 350.5" fill="none" stroke="#555" stroke-width=".7"/>
<text class="h" x="952" y="371">结构线密度</text>
<text class="g" x="963" y="385.5">密度</text>
<rect x="1048" y="377" width="9" height="12" fill="#eee"/><path d="M1051 381 L1052.5 379.5 L1054 381 M1051 385 L1052.5 386.5 L1054 385" fill="none" stroke="#666" stroke-width=".6"/>
<text class="g" x="963" y="399.5">显示曲面...</text>
<rect x="1005.5" y="394" width="6.5" height="6.5" fill="#f8f8f8" stroke="#ccc" stroke-width=".7"/>
<rect x="950" y="408" width="108" height="15" fill="#e4e4e6" stroke="#c8c8cc" stroke-width=".7"/>
<text x="992" y="418" style="fill:#333">匹配(M)</text>
<rect x="950" y="426" width="108" height="15" fill="#e4e4e6" stroke="#c8c8cc" stroke-width=".7"/>
<text x="983" y="436" style="fill:#333">详细数据(D)...</text>
</g>
<!-- vertical tabs -->
<g>
<path d="M1059 113 L1064 112 H1079 V147 H1059 Z M1059 149 L1064 148 H1079 V180 H1059 Z M1059 182 L1064 181 H1079 V211 H1059 Z M1059 213 L1064 212 H1079 V247 H1059 Z M1059 249 L1064 248 H1079 V281 H1059 Z M1059 283 L1064 282 H1079 V314 H1059 Z M1059 316 L1064 315 H1079 V364 H1059 Z" fill="#f4f5f8" stroke="#d0d4de" stroke-width=".6"/>
<path d="M1059 369 L1064 366 H1079 V403 H1059 Z" fill="#fff" stroke="#c8ccd6" stroke-width=".6"/>
<g transform="translate(1071 118)"><path d="M-5 -4 H5 L3 3 L0 5 L-3 3 Z" fill="#d83818"/><path d="M-5 -4 H5 L4 -1 H-4 Z" fill="#2a5ab0"/></g>
<use href="#sb" x="1071" y="153"/>
<g transform="translate(1071 185)"><path d="M-4 4 L3 -4" stroke="#888" stroke-width="2"/><circle cx="3" cy="-3" r="2" fill="#d84818"/></g>
<g transform="translate(1071 217)"><path d="M-5 -3 H-1 L0 -2 H5 V4 H-5Z" fill="#e8b020" stroke="#a07010" stroke-width=".5"/></g>
<g transform="translate(1071 255)"><rect x="-4.5" y="-4" width="9" height="8" fill="#5a7cd0"/><path d="M-3 -1 H3 M-3 1 H3" stroke="#fff" stroke-width=".7"/></g>
<g transform="translate(1071 289)"><circle cy="-1" r="4" fill="#f0c828"/><path d="M-2 3 L-4 5" stroke="#888" stroke-width="1.5"/></g>
<g transform="translate(1071 322)"><rect x="-5" y="-3" width="10" height="7" rx="1" fill="#222"/><circle cy=".5" r="2" fill="#666"/><rect x="-2" y="-5" width="4" height="2" fill="#222"/></g>
<circle cx="1071" cy="375" r="3.8" fill="#fff" stroke="#d030a0" stroke-width="2.4"/>
<path d="M1067.5 373 A3.8 3.8 0 0 1 1071 371" fill="none" stroke="#e8c020" stroke-width="2.4"/>
<path d="M1074.5 377 A3.8 3.8 0 0 1 1071 379" fill="none" stroke="#30b040" stroke-width="2.4"/>
<path d="M1067.5 377 A3.8 3.8 0 0 0 1071 379" fill="none" stroke="#2050d0" stroke-width="2.4"/>
</g>
<g class="v">
<text x="1067.5" y="127">图层</text><text x="1067.5" y="159">渲染</text><text x="1067.5" y="192">材质</text><text x="1067.5" y="223">材质库</text><text x="1067.5" y="262">说明</text><text x="1067.5" y="296">灯光</text><text x="1067.5" y="328">已命名视图</text><text x="1067.5" y="384">属性</text>
</g>
<circle cx="1075" cy="551" r="2.6" fill="#e8e8ea" stroke="#aaa" stroke-width=".6"/>

<!-- Inset -->
<rect x="866" y="57" width="192" height="154" fill="#555" opacity=".35" filter="url(#b2)" transform="translate(1 1)"/>
<g transform="translate(866 57) scale(.33333)">
<clipPath id="cI"><rect x="0" y="0" width="576" height="462"/></clipPath>
<g clip-path="url(#cI)">
<rect width="576" height="462" fill="url(#ibg)"/>
<rect width="576" height="462" fill="url(#ibg2)"/>
<path d="M65 310 C70 220 170 110 230 50 C290 25 320 30 340 60 C280 180 240 340 190 432 C120 415 75 370 65 310Z" transform="translate(-28 -2)" fill="#17478e" opacity=".85" filter="url(#b6)"/>
<path d="M200 440 C280 430 330 385 400 385 L520 330 L530 370 L300 460 L190 460Z" fill="#5a6a98" opacity=".45" filter="url(#b2)"/>
<clipPath id="cM"><path d="M65 310 C72 260 110 190 170 110 C200 70 250 28 310 28 C370 28 425 55 455 95 C480 130 510 175 530 225 C545 265 530 305 490 335 C450 362 395 382 340 365 C320 372 300 395 260 420 C225 436 165 437 120 415 C85 395 62 360 65 310Z"/></clipPath>
<path d="M65 310 C72 260 110 190 170 110 C200 70 250 28 310 28 C370 28 425 55 455 95 C480 130 510 175 530 225 C545 265 530 305 490 335 C450 362 395 382 340 365 C320 372 300 395 260 420 C225 436 165 437 120 415 C85 395 62 360 65 310Z" fill="#c6d3e6"/>
<g clip-path="url(#cM)">
<rect width="576" height="462" fill="url(#ic2)"/>
<rect width="576" height="462" fill="url(#ic3)"/>
<rect width="576" height="462" fill="url(#ic1)"/>
<path d="M345 364 C400 345 470 290 490 180 C525 220 550 260 532 300 C500 352 430 385 345 364Z" fill="#dde1ec" filter="url(#b2)"/>
<path d="M60 300 C70 265 85 235 102 215 C86 260 84 320 118 362 C130 380 170 400 200 410 C150 420 100 410 70 370Z" fill="#6a64cc" opacity=".75" filter="url(#b2)"/>
<path d="M62 320 C68 280 80 250 92 232 C82 270 80 310 98 345 C85 345 68 340 62 320Z" fill="#8a66c8" filter="url(#b1)"/>
</g>
<path d="M335 368 C360 378 395 382 425 372" fill="none" stroke="#1e5aa8" stroke-width="3"/>
<path d="M84 290 C84 240 140 160 195 100 C240 62 310 55 352 88 C392 130 398 175 382 235 C360 310 290 372 205 374 C135 378 84 345 84 290Z" fill="#93b2d2" filter="url(#b1)"/>
<path d="M94 282 C96 236 150 165 200 108 C245 72 310 65 345 95 C385 135 388 175 372 232 C352 300 285 358 205 362 C140 366 94 335 94 282Z" fill="url(#itop)" filter="url(#b1)"/>
<path d="M352 88 C392 130 398 175 382 235" fill="none" stroke="#7b90b2" stroke-width="1.5"/>
<circle cx="192" cy="275" r="23" fill="#a6b9d6" stroke="#93a9ca"/>
<text x="180" y="280" style="font-size:15px;font-weight:700;fill:#6a55c8">log</text>
<path d="M176 297 C160 315 145 333 120 354" fill="none" stroke="#6484a8" stroke-width="1.5"/>
<circle cx="307" cy="125" r="2.5" fill="#fff"/><circle cx="300" cy="135" r="2.5" fill="#fff"/><circle cx="292" cy="145" r="2.5" fill="#fff"/>
</g>
</g>

<!-- Osnap -->
<g class="o">
<g fill="#f4f5f8" stroke="#777" stroke-width=".6">
<rect x="0.5" y="564" width="5.5" height="5.5"/><rect x="28" y="564" width="5.5" height="5.5"/><rect x="63" y="564" width="5.5" height="5.5"/><rect x="83" y="564" width="5.5" height="5.5"/><rect x="111" y="564" width="5.5" height="5.5"/><rect x="146" y="564" width="5.5" height="5.5"/><rect x="173" y="564" width="5.5" height="5.5"/><rect x="200" y="564" width="5.5" height="5.5"/><rect x="228" y="564" width="5.5" height="5.5"/><rect x="263" y="564" width="5.5" height="5.5"/><rect x="291" y="564" width="5.5" height="5.5"/>
<rect x="318" y="564" width="5.5" height="5.5" stroke="#bbb"/><rect x="354" y="564" width="5.5" height="5.5" stroke="#bbb"/>
</g>
<path d="M1.5 566.5 L3 568.5 L5.5 564.5 M29 566.5 L30.5 568.5 L33 564.5 M174 566.5 L175.5 568.5 L178 564.5 M229 566.5 L230.5 568.5 L233 564.5" fill="none" stroke="#444" stroke-width=".6"/>
<text x="8" y="570">端点</text><text x="36" y="570">最近点</text><text x="71" y="570">点</text><text x="91" y="570">中点</text><text x="119" y="570">中心点</text><text x="154" y="570">交点</text><text x="181" y="570">垂点</text><text x="209" y="570">切点</text><text x="237" y="570">四分点</text><text x="271" y="570">节点</text><text x="299" y="570">顶点</text><text x="327" y="570">投影</text><text x="362" y="570">停用</text>
</g>

<!-- Status -->
<rect x="0" y="575" width="1080" height="12" fill="#ebedf2"/>
<rect x="0" y="574.5" width="1080" height=".7" fill="#cdd1da"/>
<rect x="1" y="576" width="28" height="11" fill="#f6f7f9"/>
<rect x="383" y="576" width="32" height="11" fill="#fbfcfd"/>
<rect x="487" y="576" width="24" height="11" fill="#fbfcfd"/>
<rect x="232" y="578" width="8" height="8" fill="#000"/>
<path d="M31 575 V587 M77 575 V587 M131 575 V587 M181 575 V587 M226 575 V587 M325 575 V587 M360 575 V587 M381 575 V587 M452 575 V587 M486 575 V587 M514 575 V587 M563 575 V587 M589 575 V587" stroke="#d2d6de" stroke-width=".7"/>
<g class="s">
<text x="0" y="585">工作平面</text><text x="43" y="585">x 6.318</text><text x="88" y="585">y -56.246</text><text x="142" y="585">z 0.000</text><text x="198" y="585">毫米</text><text x="241" y="585">默认</text><text x="328" y="585">锁定格点</text><text x="363" y="585">正交</text><text x="384" y="585" style="font-weight:700">平面模式</text><text x="419" y="585" style="font-weight:700">物件锁点</text><text x="454" y="585">智慧轨迹</text><text x="488" y="585" style="font-weight:700">操作轴</text><text x="517" y="585">记录建构历史</text><text x="565" y="585">过滤器</text><text x="592" y="585">距离上次保存的时间 (分钟): 11</text>
</g>
<rect x="0" y="587" width="1080" height="3" fill="#0c0c0c"/>
</svg>
</body></html>
